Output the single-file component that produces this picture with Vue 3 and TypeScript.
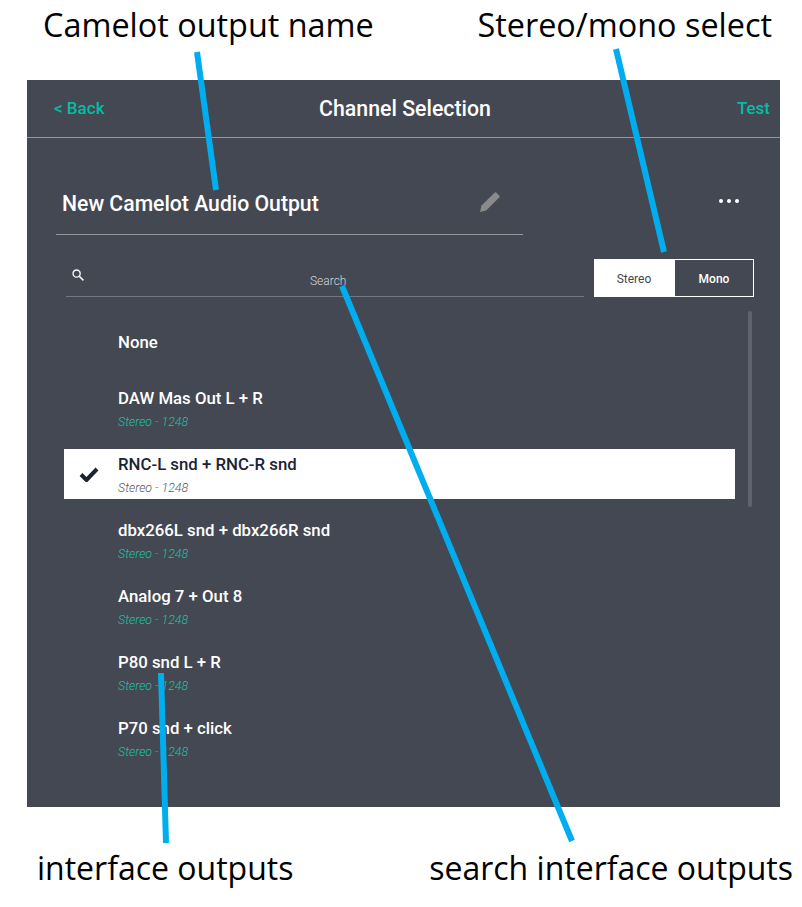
<script setup lang="ts">
interface Output { name: string; sub?: string; selected?: boolean }
const outputs: Output[] = [
  { name: 'None' },
  { name: 'DAW Mas Out L + R', sub: 'Stereo - 1248' },
  { name: 'RNC-L snd + RNC-R snd', sub: 'Stereo - 1248', selected: true },
  { name: 'dbx266L snd + dbx266R snd', sub: 'Stereo - 1248' },
  { name: 'Analog 7 + Out 8', sub: 'Stereo - 1248' },
  { name: 'P80 snd L + R', sub: 'Stereo - 1248' },
  { name: 'P70 snd + click', sub: 'Stereo - 1248' },
]
const callouts = [
  { x1: 197, y1: 52, x2: 216, y2: 190 },
  { x1: 616, y1: 49, x2: 664, y2: 252 },
  { x1: 342, y1: 286, x2: 572, y2: 841 },
  { x1: 161, y1: 673, x2: 166, y2: 843 },
]
</script>

<template>
  <div class="page">
    <div class="notes-top">
      <span class="note">Camelot output name</span>
      <span class="note">Stereo/mono select</span>
    </div>
    <main class="panel">
      <header class="bar">
        <span class="link start">&lt; Back</span>
        <h1 class="title">Channel Selection</h1>
        <span class="link end">Test</span>
      </header>
      <section class="name-row">
        <div class="name-field">
          <span class="name-text">New Camelot Audio Output</span>
          <svg class="pencil" viewBox="0 0 20 20" width="20" height="20">
            <path d="M0 20 L1.5 13.6 L14.8 0.6 Q15.5 0 16.2 0.6 L19.4 3.8 Q20 4.5 19.4 5.2 L6.2 18.4 Z" fill="#8a8a8a" />
          </svg>
        </div>
        <div class="dots"><i></i><i></i><i></i></div>
      </section>
      <section class="search-row">
        <div class="search">
          <svg class="search-icon" viewBox="0 0 12 12" width="12" height="12">
            <circle cx="4.6" cy="4.6" r="3.6" fill="none" stroke="#fff" stroke-width="1.3" />
            <path d="M7.3 7.3 L11.4 11.4" stroke="#fff" stroke-width="1.5" />
          </svg>
          <span class="search-text">Search</span>
        </div>
        <div class="toggle">
          <span class="opt on">Stereo</span>
          <span class="opt">Mono</span>
        </div>
      </section>
      <section class="list-wrap">
        <ul class="list">
          <li v-for="o in outputs" :key="o.name" class="row" :class="{ selected: o.selected }">
            <svg v-if="o.selected" class="check" viewBox="0 0 20 16" width="20" height="16">
              <path d="M2 8.5 L7.5 14 L18 3" fill="none" stroke="#1c2333" stroke-width="4" />
            </svg>
            <div class="name">{{ o.name }}</div>
            <div v-if="o.sub" class="sub">{{ o.sub }}</div>
          </li>
        </ul>
        <div class="scrollbar"></div>
      </section>
    </main>
    <div class="notes-bottom">
      <span class="note small">interface outputs</span>
      <span class="note small">search interface outputs</span>
    </div>
    <svg class="callouts" width="802" height="907" viewBox="0 0 802 907">
      <line v-for="(c, i) in callouts" :key="i" :x1="c.x1" :y1="c.y1" :x2="c.x2" :y2="c.y2" stroke="#00aeef" stroke-width="6" />
    </svg>
  </div>
</template>

<style>
html, body { margin: 0; background: #fff; }
</style>

<style scoped>
.page { position: relative; width: 802px; height: 907px; overflow: hidden; font-family: Roboto, sans-serif; background: #fff; }
.notes-top { height: 80px; display: flex; justify-content: space-between; padding: 0 30px 0 43px; box-sizing: border-box; }
.notes-bottom { height: 100px; display: flex; justify-content: space-between; padding: 36px 9px 0 37px; box-sizing: border-box; }
.note { font-family: "Open Sans", sans-serif; font-size: 32.4px; line-height: 48px; color: #000; white-space: nowrap; }
.note.small { font-size: 32px; line-height: 50px; }
.panel { margin-left: 27px; width: 753px; height: 727px; background: #434852; color: #fff; }
.bar { height: 58px; box-sizing: border-box; border-bottom: 1px solid #94979c; display: grid; grid-template-columns: 1fr auto 1fr; align-items: center; padding: 0 10px 1px 13px; }
.link { color: #00bfa5; font-size: 17px; font-weight: 500; }
.link.start { margin-left: 14px; }
.link.end { justify-self: end; }
.title { margin: 0; font-size: 21.3px; font-weight: 500; }
.name-row { display: flex; align-items: flex-start; height: 97px; padding-left: 29px; padding-top: 38px; box-sizing: border-box; }
.name-field { width: 467px; height: 59px; box-sizing: border-box; border-bottom: 1px solid #94979c; display: flex; justify-content: space-between; padding: 0 23px 0 6px; }
.name-text { font-size: 21.2px; font-weight: 500; line-height: 54px; margin-top: 1px; }
.pencil { margin-top: 16px; }
.dots { display: flex; gap: 4px; margin-left: 196px; margin-top: 23px; }
.dots i { width: 4px; height: 4px; border-radius: 50%; background: #fff; display: block; }
.search-row { display: flex; height: 38px; margin-top: 24px; padding-left: 39px; align-items: flex-start; }
.search { width: 518px; height: 38px; box-sizing: border-box; border-bottom: 1px solid #74777d; display: flex; position: relative; margin-right: 10px; flex: none; }
.search-icon { margin: 9.5px 0 0 6px; }
.search-text { position: absolute; left: 244px; top: 15px; font-size: 12px; font-weight: 300; color: #d4d5d8; line-height: 14px; }
.toggle { width: 160px; height: 38px; box-sizing: border-box; border: 1px solid #fff; display: flex; flex: none; }
.opt { flex: 1; display: flex; align-items: center; justify-content: center; font-size: 12px; font-weight: 500; padding-top: 2px; }
.opt.on { background: #fff; color: #434852; flex: none; width: 80px; font-weight: 400; padding-right: 2px; box-sizing: border-box; }
.list-wrap { position: relative; padding: 20px 0 0 37px; }
.list { list-style: none; margin: 0; padding: 0; width: 671px; display: flex; flex-direction: column; gap: 16px; }
.row { position: relative; height: 50px; box-sizing: border-box; padding-left: 54px; display: flex; flex-direction: column; justify-content: center; }
.row .name { font-size: 16.8px; font-weight: 500; line-height: 20px; }
.row .sub { font-size: 12.4px; font-weight: 300; font-style: italic; color: #1cc0a9; line-height: 14px; margin-top: 7px; }
.row.selected { background: #fff; color: #1c2333; }
.row.selected .sub { color: #555a63; }
.check { position: absolute; left: 15px; top: 17px; }
.scrollbar { position: absolute; left: 721px; top: 14px; width: 4px; height: 196px; border-radius: 2px; background: #5f636c; }
.callouts { position: absolute; left: 0; top: 0; pointer-events: none; }
</style>
